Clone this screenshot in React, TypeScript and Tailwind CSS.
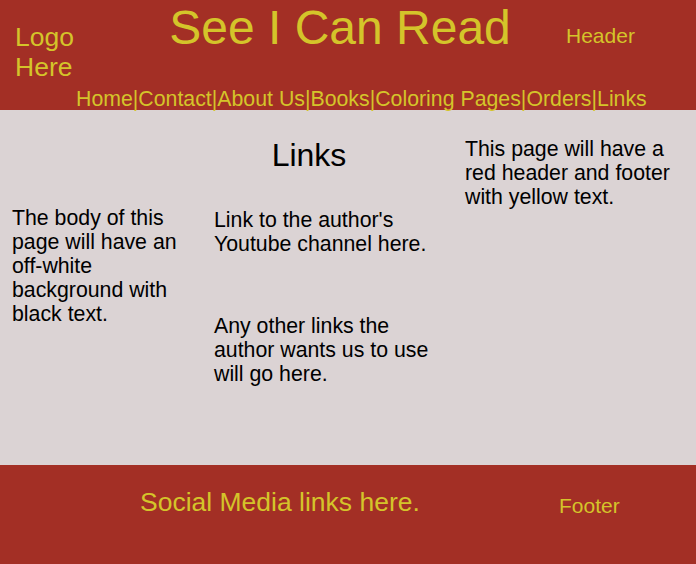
import React from "react";

const navItems = ["Home", "Contact", "About Us", "Books", "Coloring Pages", "Orders", "Links"];

export default function App() {
  return (
    <div className="w-[696px] h-[564px] flex flex-col font-['Liberation_Sans',Arial,sans-serif] bg-[#dbd3d4]">
      {/* header */}
      <header className="h-[110px] bg-[#a32f25] text-[#d4c42a] flex flex-col">
        <div className="h-[88px] grid grid-cols-[155px_1fr_171px] items-start">
          <div className="pl-[15px] mt-[22px] text-[26.5px] leading-[30px]">
            Logo
            <br />
            Here
          </div>
          <div className="text-center text-[48px] leading-[55px] whitespace-nowrap">See I Can Read</div>
          <div className="pl-[41px] mt-[24px] text-[21px] leading-[24px]">Header</div>
        </div>
        <nav className="pl-[76px] text-[21.3px] leading-[22px] whitespace-nowrap">
          {navItems.map((item, i) => (
            <span key={item}>
              {i > 0 && "|"}
              {item}
            </span>
          ))}
        </nav>
      </header>

      {/* body */}
      <main className="h-[355px] flex items-start pt-[27px] text-black text-[21.3px] leading-[24px]">
        <div className="w-[195px] px-[12px] mt-[69px]">
          The body of this page will have an off-white background with black text.
        </div>
        <div className="w-[250px]">
          <h1 className="pr-[22px] text-center text-[32px] leading-[37px]">Links</h1>
          <p className="pl-[19px] mt-[34px]">Link to the author's Youtube channel here.</p>
          <p className="pl-[19px] mt-[58px]">Any other links the author wants us to use will go here.</p>
        </div>
        <div className="flex-1 pl-[20px] pr-[12px]">
          This page will have a red header and footer with yellow text.
        </div>
      </main>

      {/* footer */}
      <footer className="h-[99px] bg-[#a32f25] text-[#d4c42a] flex items-start">
        <div className="pl-[140px] mt-[22px] w-[559px] text-[26.5px] leading-[30px] whitespace-nowrap">
          Social Media links here.
        </div>
        <div className="mt-[29px] text-[21px] leading-[24px]">Footer</div>
      </footer>
    </div>
  );
}
